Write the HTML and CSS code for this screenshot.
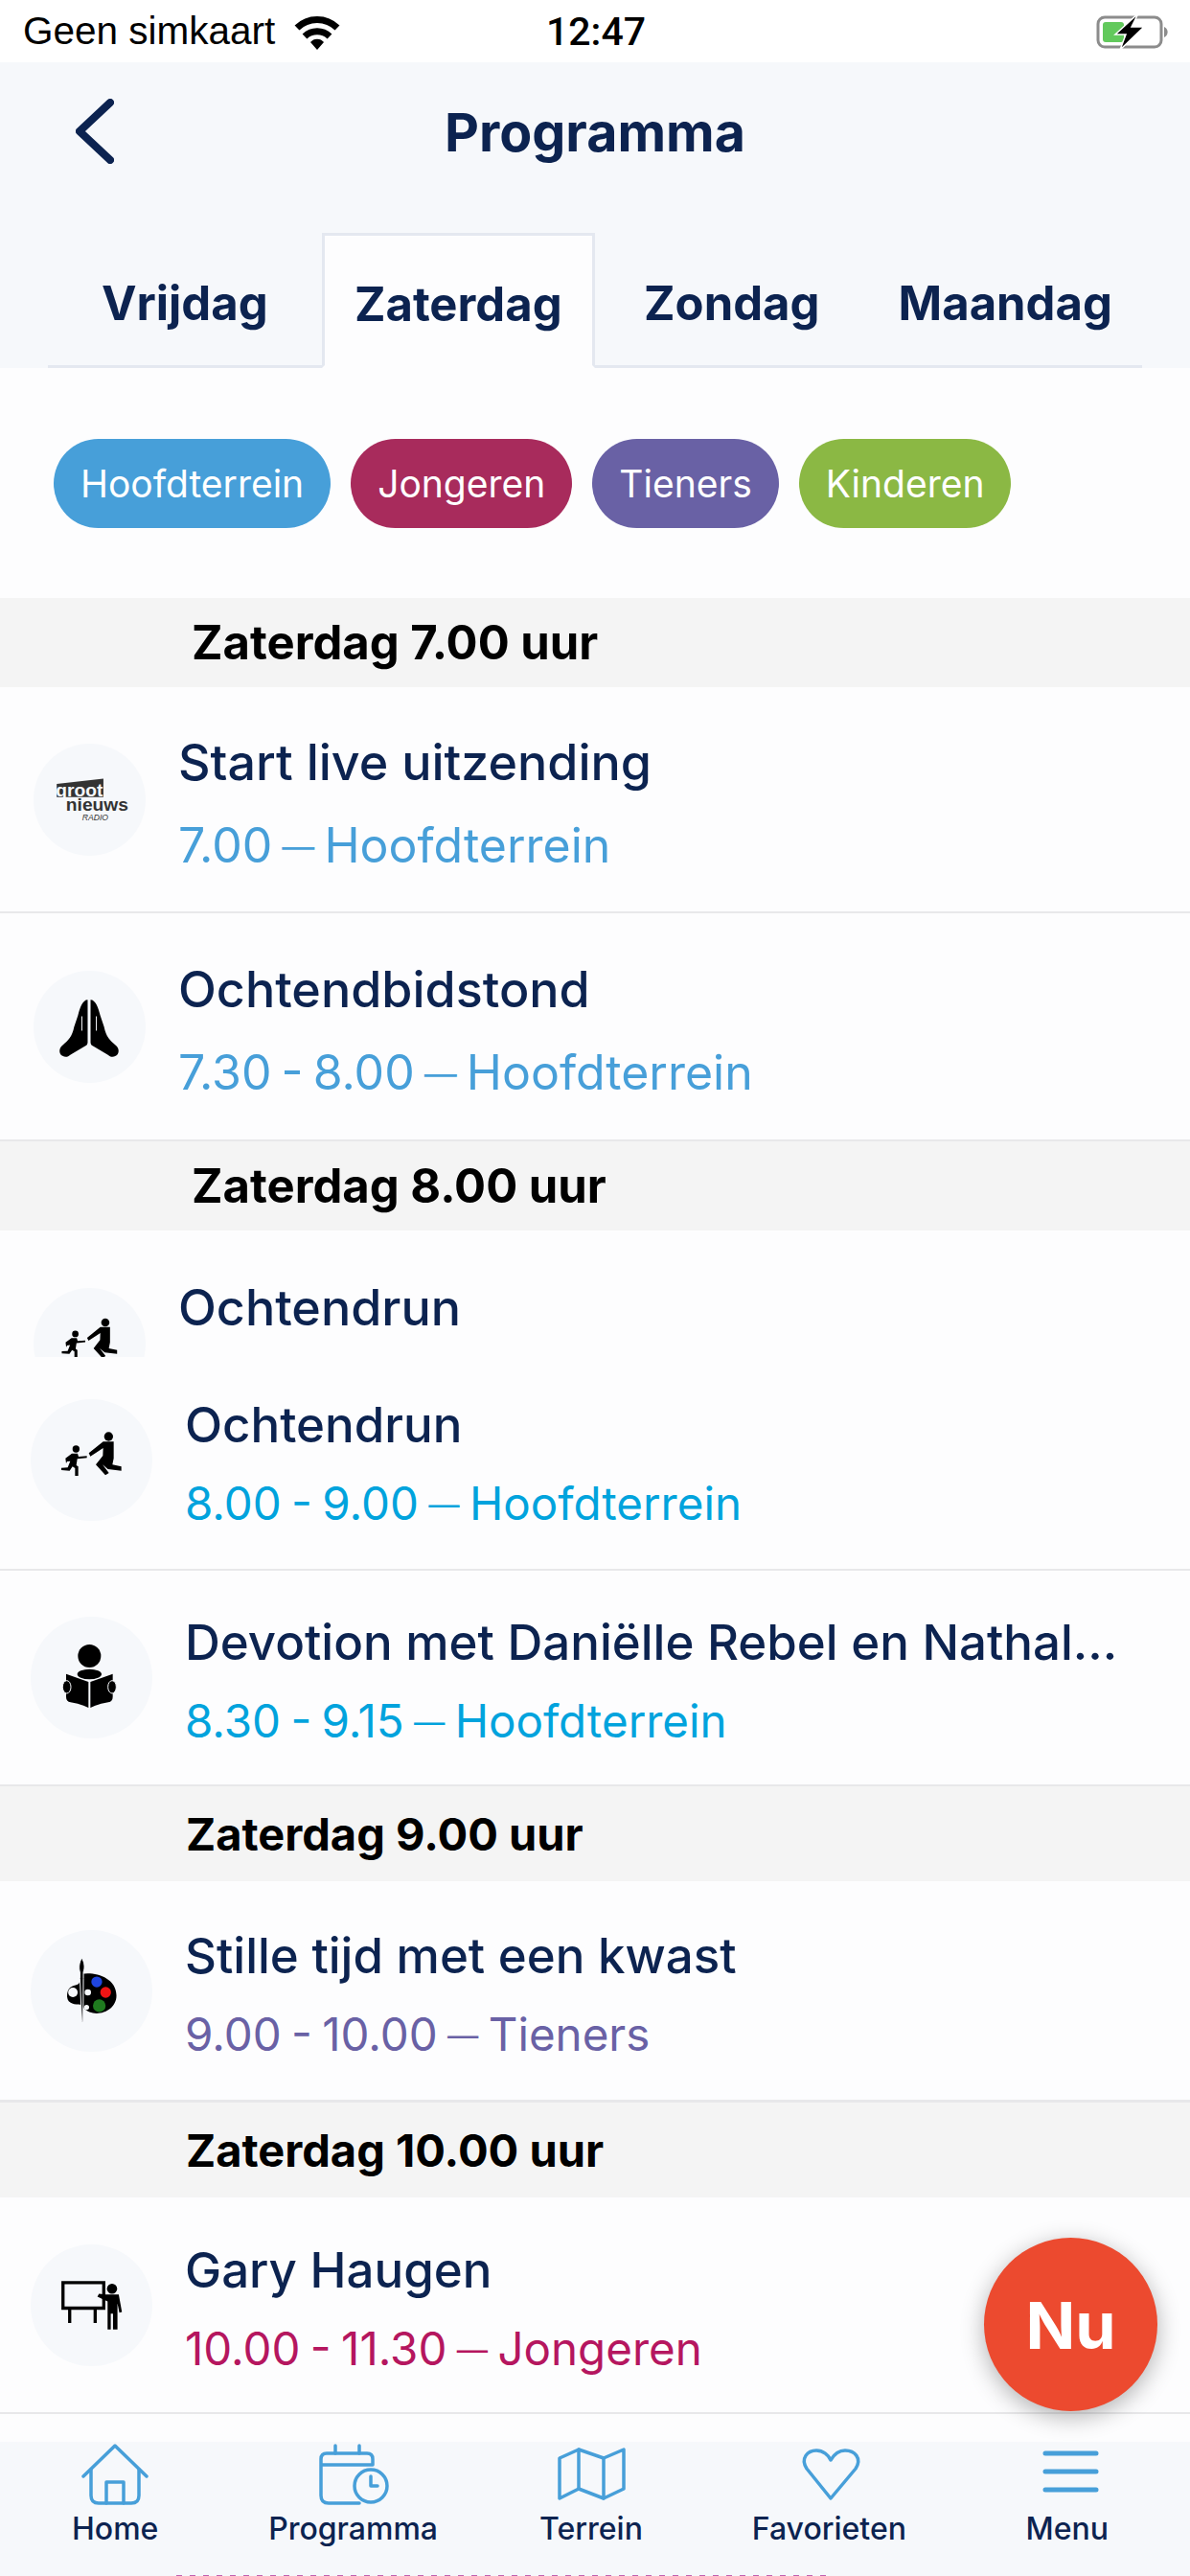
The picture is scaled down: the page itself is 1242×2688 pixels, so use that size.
FILE: index.html
```html
<!DOCTYPE html>
<html lang="nl">
<head>
    <meta charset="UTF-8">
    <meta name="viewport" content="width=device-width, initial-scale=1.0">
    <title>Programma</title>
    <link rel="stylesheet" href="styles.css">
</head>
<body>
    <div class="phone">
        <div class="status-bar">
            <div class="status-left">
                <span>Geen simkaart</span>
                <svg class="wifi" viewBox="0 0 48 38" fill="none" stroke="#000" stroke-width="7">
                    <path d="M3 15a30 30 0 0 1 42 0"/>
                    <path d="M11 24a19 19 0 0 1 26 0"/>
                    <path d="M24 38l-7-8a9 9 0 0 1 14 0z" fill="#000" stroke="none"/>
                </svg>
            </div>
            <span class="status-time">12:47</span>
            <div class="status-right">
                <svg class="battery" viewBox="0 0 76 38">
                    <rect x="2" y="4" width="66" height="31" rx="7" fill="none" stroke="#8c8c8c" stroke-width="3"/>
                    <path d="M71 14a6 6 0 0 1 0 11z" fill="#8c8c8c"/>
                    <rect x="7" y="9" width="22" height="21" rx="3" fill="#62c95c"/>
                    <path d="M44 0L20 22h11l-6 16 25-24H37z" fill="#000" stroke="#fff" stroke-width="1.5"/>
                </svg>
            </div>
        </div>

        <div class="page-head">
            <div class="head-left">
                <svg class="back" viewBox="0 0 40 68" fill="none" stroke="#0c2350" stroke-width="8" stroke-linecap="round" stroke-linejoin="round">
                    <path d="M36 4L4 34l32 30"/>
                </svg>
            </div>
            <h1>Programma</h1>
            <div></div>
        </div>

        <div class="tabs">
            <div class="tab">Vrijdag</div>
            <div class="tab tab-active">Zaterdag</div>
            <div class="tab">Zondag</div>
            <div class="tab">Maandag</div>
        </div>

        <div class="filters">
            <span class="pill pill-main">Hoofdterrein</span>
            <span class="pill pill-youth">Jongeren</span>
            <span class="pill pill-teens">Tieners</span>
            <span class="pill pill-kids">Kinderen</span>
        </div>

        <div class="list list-top">
            <div class="section">Zaterdag 7.00 uur</div>
            <div class="row">
                <div class="badge">
                    <svg viewBox="105 45 347 353">
                        <path d="M175 172L322 155V213H175z" fill="#333"/>
                        <text class="logo-big logo-white" x="172" y="212">groot</text>
                        <text class="logo-big logo-dark" x="204" y="257">nieuws</text>
                        <text class="logo-small" x="255" y="287">RADIO</text>
                    </svg>
                </div>
                <div class="row-text">
                    <div class="row-title">Start live uitzending</div>
                    <div class="row-sub sub-main">7.00 <span class="dash">—</span> Hoofdterrein</div>
                </div>
            </div>
            <div class="row">
                <div class="badge">
                    <svg viewBox="0 0 116 116">
                        <g id="hand">
                            <path d="M56 30c-5 0-8 8-10 16l-4 12c-2 10-6 14-12 19-4 3-4 9 0 11 3 2 6 1 8-1l15-9c2-1 3-2 3-4z"/>
                            <path d="M50 47v15" fill="none" stroke="#f6f8fb" stroke-width="1"/>
                        </g>
                        <use href="#hand" transform="matrix(-1 0 0 1 115 0)"/>
                    </svg>
                </div>
                <div class="row-text">
                    <div class="row-title">Ochtendbidstond</div>
                    <div class="row-sub sub-main">7.30 - 8.00 <span class="dash">—</span> Hoofdterrein</div>
                </div>
            </div>
            <div class="section">Zaterdag 8.00 uur</div>
            <div class="row row-cut">
                <div class="badge">
                    <svg viewBox="96 393 381 381"><use href="#runners"/></svg>
                </div>
                <div class="row-text">
                    <div class="row-title">Ochtendrun</div>
                </div>
            </div>
        </div>

        <div class="list list-bottom">
            <div class="row row-first">
                <div class="badge">
                    <svg viewBox="96 393 381 381">
                        <g id="runners">
                            <circle cx="340" cy="510" r="14"/>
                            <path d="M278 562l45-36h33v52l-4 20 28 6v13l-42-5-17-14 20 26-11 7-30-33 22-28 1-24-40 26z"/>
                            <circle cx="238" cy="549" r="11"/>
                            <path d="M205 578l20-15h18l3 10 26-2v6l-30 3-3 20 6 4v29h-10v-24l-8-5-9 13-26-2v-7l20-1 8-20-10 1-3 6z"/>
                        </g>
                    </svg>
                </div>
                <div class="row-text">
                    <div class="row-title">Ochtendrun</div>
                    <div class="row-sub sub-live">8.00 - 9.00 <span class="dash">—</span> Hoofdterrein</div>
                </div>
            </div>
            <div class="row">
                <div class="badge">
                    <svg viewBox="96 1072 381 381">
                        <circle cx="280" cy="1195" r="36"/>
                        <ellipse cx="280" cy="1252" rx="38" ry="16"/>
                        <path d="M277 1276l-70-25v72q0 14 14 17 32 5 56 17z"/>
                        <path d="M283 1276l70-25v72q0 14-14 17-32 5-56 17z"/>
                        <ellipse cx="209" cy="1292" rx="13" ry="20" stroke="#f6f8fb" stroke-width="3"/>
                        <ellipse cx="351" cy="1292" rx="13" ry="20" stroke="#f6f8fb" stroke-width="3"/>
                    </svg>
                </div>
                <div class="row-text">
                    <div class="row-title">Devotion met Daniëlle Rebel en Nathal...</div>
                    <div class="row-sub sub-live">8.30 - 9.15 <span class="dash">—</span> Hoofdterrein</div>
                </div>
            </div>
            <div class="section">Zaterdag 9.00 uur</div>
            <div class="row">
                <div class="badge">
                    <svg viewBox="96 102 381 383">
                        <path d="M255 240c40-8 110 10 110 68 0 44-50 66-85 52-22-9-20-24-34-24-18 0-40-4-36-34 4-26 25-24 35-30 8-5 4-25 10-32z"/>
                        <circle cx="228" cy="298" r="15" fill="#f6f8fb"/>
                        <circle cx="275" cy="298" r="10" fill="#f6f8fb"/>
                        <circle cx="271" cy="345" r="8" fill="#f6f8fb"/>
                        <path d="M256 190c9 14 10 32 5 44v20l-1 136-4-1-6-135v-20c-4-12-3-30 6-44z" stroke="#f6f8fb" stroke-width="3"/>
                        <circle cx="303" cy="265" r="17" fill="#1f45e0"/>
                        <circle cx="331" cy="298" r="17" fill="#f01414"/>
                        <circle cx="311" cy="340" r="20" fill="#1f7a1f"/>
                    </svg>
                </div>
                <div class="row-text">
                    <div class="row-title">Stille tijd met een kwast</div>
                    <div class="row-sub sub-teens">9.00 - 10.00 <span class="dash">—</span> Tieners</div>
                </div>
            </div>
            <div class="section">Zaterdag 10.00 uur</div>
            <div class="row">
                <div class="badge">
                    <svg viewBox="96 1083 381 382">
                        <path d="M197 1203h128v80H197zM218 1283v47M298 1283v47" fill="none" stroke="#000" stroke-width="10"/>
                        <circle cx="351" cy="1222" r="16"/>
                        <path d="M330 1240h42l10 55-8 2-6-29v82h-14v-50h-7v50h-10v-88l-32-15 5-9z"/>
                    </svg>
                </div>
                <div class="row-text">
                    <div class="row-title">Gary Haugen</div>
                    <div class="row-sub sub-youth">10.00 - 11.30 <span class="dash">—</span> Jongeren</div>
                </div>
            </div>
        </div>

        <div class="fab">Nu</div>

        <div class="tabbar">
            <div class="tabbar-item">
                <svg viewBox="0 0 80 64">
                    <path d="M7 34L40 2l33 32"/>
                    <path d="M15 27v27q0 8 8 8h34q8 0 8-8V27"/>
                    <path d="M31 62V40h18v22"/>
                </svg>
                <span>Home</span>
            </div>
            <div class="tabbar-item">
                <svg viewBox="0 0 80 64">
                    <path d="M6 22h54v-6q0-6-6-6H12q-6 0-6 6v38q0 8 8 8h32"/>
                    <path d="M21 10V2M46 10V2"/>
                    <circle cx="58" cy="44" r="17"/>
                    <path d="M58 34v10h7"/>
                </svg>
                <span>Programma</span>
            </div>
            <div class="tabbar-item">
                <svg viewBox="0 0 80 64">
                    <path d="M7 15l20-9 26 9 21-9v41l-21 10-26-10-20 10z"/>
                    <path d="M27 6v41M53 15v42"/>
                </svg>
                <span>Terrein</span>
            </div>
            <div class="tabbar-item">
                <svg viewBox="0 0 80 64">
                    <path d="M42 57L17 26C10 15 18 7 27 7c7 0 13 5 15 10 3-5 8-10 15-10 10 0 18 8 11 19z"/>
                </svg>
                <span>Favorieten</span>
            </div>
            <div class="tabbar-item">
                <svg viewBox="0 0 80 64">
                    <path d="M17 10h53M17 29h53M17 48h53" stroke-width="5"/>
                </svg>
                <span>Menu</span>
            </div>
        </div>
        <div class="peek"></div>
    </div>
</body>
</html>
```

FILE: styles.css
```css
* {
    box-sizing: border-box;
    margin: 0;
    padding: 0;
}

body {
    font-family: 'Inter', 'Liberation Sans', sans-serif;
    color: #0c2350;
    background-color: #fdfdfe;
}

.phone {
    position: relative;
    width: 1242px;
    height: 2688px;
    overflow: hidden;
    background-color: #fdfdfe;
}

/* status bar */

.status-bar {
    display: grid;
    grid-template-columns: 1fr auto 1fr;
    align-items: center;
    height: 65px;
    padding: 0 22px 0 24px;
    background-color: #fff;
    color: #000;
    font-family: 'Liberation Sans', sans-serif;
    font-size: 40.5px;
}

.status-left {
    display: flex;
    align-items: center;
    gap: 20px;
}

.status-time {
    font-family: 'Roboto', sans-serif;
    font-size: 41px;
    font-weight: 500;
}

.status-right {
    display: flex;
    justify-content: flex-end;
}

.wifi {
    width: 48px;
    height: 38px;
}

.battery {
    width: 76px;
    height: 38px;
}

/* header + day tabs */

.page-head {
    display: grid;
    grid-template-columns: 1fr auto 1fr;
    align-items: center;
    height: 178px;
    padding-bottom: 34px;
    background-color: #f6f8fb;
}

.head-left {
    padding-left: 79px;
}

.back {
    display: block;
    width: 40px;
    height: 68px;
}

h1 {
    font-size: 55.5px;
    font-weight: 700;
}

.tabs {
    display: grid;
    grid-template-columns: repeat(4, 1fr);
    height: 141px;
    padding: 0 50px;
    background-color: #f6f8fb;
}

.tab {
    display: flex;
    align-items: center;
    justify-content: center;
    padding-top: 8px;
    border-bottom: 3px solid #e4e8f0;
    font-size: 49px;
    font-weight: 700;
}

.tab-active {
    border: 3px solid #e4e8f0;
    border-bottom-color: transparent;
    background-color: #fdfdfe;
}

/* filter pills */

.filters {
    display: flex;
    gap: 21px;
    height: 240px;
    padding: 74px 0 0 56px;
}

.pill {
    display: flex;
    align-items: center;
    height: 93px;
    padding: 0 28px;
    border-radius: 47px;
    color: #fff;
    font-size: 39px;
}

.pill-main {
    background-color: #479fd9;
}

.pill-youth {
    background-color: #a82b5c;
}

.pill-teens {
    background-color: #6961a5;
}

.pill-kids {
    background-color: #8bb844;
}

/* programme list */

.section {
    display: flex;
    align-items: center;
    background-color: #f4f4f4;
    color: #000;
    font-weight: 700;
}

.row {
    display: flex;
    align-items: center;
    border-bottom: 2px solid #e8e8ea;
}

.badge {
    flex: none;
    border-radius: 50%;
    background-color: #f6f8fb;
    overflow: hidden;
}

.badge svg {
    display: block;
    width: 100%;
    height: 100%;
}

.row-text {
    min-width: 0;
    flex: 1;
    padding-top: 12px;
}

.row-title {
    white-space: nowrap;
    font-weight: 500;
}

.dash {
    font-size: 0.68em;
    vertical-align: 0.12em;
}

.sub-main {
    color: #479fd9;
}

.sub-live {
    color: #00a3dd;
}

.sub-teens {
    color: #6961a5;
}

.sub-youth {
    color: #b5165f;
}

.list-top .section {
    height: 93px;
    padding-left: 200px;
    font-size: 49px;
}

.list-top .row {
    height: 238px;
    padding-left: 35px;
    gap: 34px;
}

.list-top .row:nth-child(2) {
    height: 236px;
}

.list-top .badge {
    width: 117px;
    height: 117px;
}

.list-top .row-title {
    font-size: 52px;
    line-height: 86px;
}

.list-top .row-sub {
    font-size: 50px;
    line-height: 86px;
    word-spacing: -4px;
}

.list-top .row-cut {
    height: 132px;
    align-items: flex-start;
    overflow: hidden;
    border-bottom: none;
}

.list-top .row-cut .badge {
    margin-top: 60px;
}

.list-top .row-cut .row-text {
    margin-top: 26px;
}

.list-bottom .section {
    height: 99px;
    padding-left: 194px;
    font-size: 47px;
}

.list-bottom .row {
    height: 225px;
    padding: 0 32px;
    gap: 34px;
}

.list-bottom .row-first {
    height: 223px;
    padding-bottom: 6px;
}

.list-bottom .section + .row {
    height: 231px;
    border-bottom-width: 3px;
}

.list-bottom .row:last-child {
    height: 226px;
    border-bottom-width: 2px;
}

.list-bottom .badge {
    width: 127px;
    height: 127px;
}

.list-bottom .row-title {
    font-size: 51px;
    line-height: 82px;
}

.list-bottom .row-sub {
    font-size: 47.5px;
    line-height: 82px;
    word-spacing: -3px;
}

.logo-big {
    font-family: 'Liberation Sans', sans-serif;
    font-size: 58px;
    font-weight: 700;
}

.logo-white {
    fill: #f6f8fb;
}

.logo-dark {
    fill: #333;
}

.logo-small {
    font-family: 'Liberation Sans', sans-serif;
    font-size: 26px;
    font-style: italic;
    fill: #333;
}

/* floating button */

.fab {
    position: absolute;
    top: 2335px;
    left: 1027px;
    display: flex;
    align-items: center;
    justify-content: center;
    width: 181px;
    height: 181px;
    border-radius: 50%;
    background-color: #ec4a2f;
    box-shadow: 0 6px 24px rgba(0, 0, 0, 0.3);
    color: #fff;
    font-size: 68px;
    font-weight: 700;
}

/* bottom tab bar */

.tabbar {
    position: absolute;
    left: -4px;
    bottom: 0;
    display: grid;
    grid-template-columns: repeat(5, 1fr);
    width: 1246px;
    height: 140px;
    padding-right: 4px;
    background-color: #f6f8fb;
}

.tabbar-item {
    display: flex;
    flex-direction: column;
    align-items: center;
    padding-top: 2px;
    font-size: 32px;
    font-weight: 500;
}

.tabbar-item svg {
    width: 80px;
    height: 64px;
    fill: none;
    stroke: #479fd9;
    stroke-width: 3.5;
    stroke-linejoin: round;
    stroke-linecap: round;
}

.tabbar-item span {
    margin-top: 5px;
}

/* tops of the next row's text showing under the tab bar */

.peek {
    position: absolute;
    left: 184px;
    bottom: 0;
    width: 681px;
    height: 1px;
    background: repeating-linear-gradient(90deg, #c060b0 0 6px, transparent 6px 14px);
}
```
